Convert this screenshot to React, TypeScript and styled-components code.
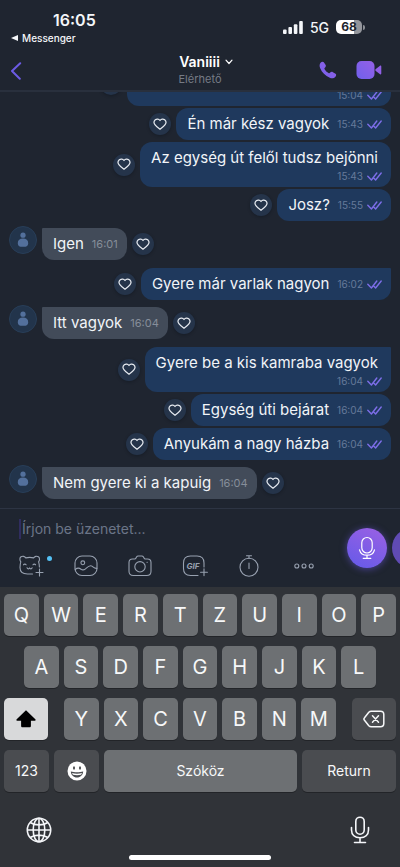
import React from 'react';
import styled, { createGlobalStyle, css } from 'styled-components';

const GlobalStyle = createGlobalStyle`
  *, *::before, *::after { box-sizing: border-box; }
  body {
    margin: 0;
    background: #1f2530;
    font-family: Inter, "Liberation Sans", sans-serif;
    -webkit-font-smoothing: antialiased;
  }
  button, input { font: inherit; }
`;

const Screen = styled.div`
  display: flex;
  flex-direction: column;
  height: 100vh;
  overflow: hidden;
  background: #1f2530;
  color: #f4f6f9;
`;

const IconButton = styled.button`
  display: inline-flex;
  align-items: center;
  justify-content: center;
  flex: none;
  padding: 0;
  border: 0;
  background: none;
  color: inherit;
  cursor: pointer;
  svg { display: block; }
`;

/* ---------- Top area ---------- */

const TopArea = styled.header`
  flex: none;
  border-bottom: 2px solid #29303d;
`;

const StatusBar = styled.div`
  display: flex;
  justify-content: space-between;
  height: 50px;
  padding: 10px 35px 0 11px;
`;

const StatusLeft = styled.div`
  display: flex;
  flex-direction: column;
`;

const Clock = styled.time`
  padding-left: 42px;
  font-size: 16px;
  line-height: 20px;
  font-weight: 600;
`;

const BackToApp = styled.a`
  display: flex;
  align-items: center;
  gap: 4px;
  font-size: 10px;
  line-height: 16px;
  font-weight: 500;
  color: #f4f6f9;
  text-decoration: none;
`;

const StatusRight = styled.div`
  display: flex;
  align-items: center;
  gap: 7px;
  height: 34px;
  font-size: 14px;
  font-weight: 500;
`;

const Battery = styled.div`
  display: flex;
  align-items: center;
  gap: 1px;
  &::after {
    content: '';
    width: 2px;
    height: 5px;
    border-radius: 0 2px 2px 0;
    background: #8b8e94;
  }
`;

const BatteryBody = styled.span`
  width: 26px;
  border-radius: 5px;
  background: linear-gradient(90deg, #ffffff 68%, #94969c 68%);
  color: #20242d;
  font-size: 12px;
  line-height: 14px;
  font-weight: 700;
  text-align: center;
`;

const NavBar = styled.div`
  display: grid;
  grid-template-columns: 1fr auto 1fr;
  align-items: center;
  height: 40px;
  padding: 0 18px 0 10px;
`;

const NavStart = styled.div`
  display: flex;
  padding-top: 2px;
`;

const Contact = styled.div`
  display: flex;
  flex-direction: column;
  align-items: center;
  padding-left: 8px;
`;

const ContactName = styled.button`
  display: flex;
  align-items: center;
  gap: 5px;
  padding: 0 0 0 12px;
  border: 0;
  background: none;
  color: #ffffff;
  font-size: 14px;
  line-height: 18px;
  font-weight: 600;
`;

const Presence = styled.span`
  font-size: 11px;
  line-height: 16px;
  color: #767b85;
`;

const Actions = styled.div`
  display: flex;
  align-items: center;
  justify-content: flex-end;
  gap: 19px;
`;

/* ---------- Messages ---------- */

const Chat = styled.main`
  display: flex;
  flex: 1;
  flex-direction: column;
  justify-content: flex-end;
  min-height: 0;
  padding: 0 9px;
  overflow: hidden;
`;

const MessageRow = styled.div<{ $own?: boolean; $first?: boolean }>`
  display: flex;
  flex: none;
  flex-direction: ${(p) => (p.$own ? 'row-reverse' : 'row')};
  align-items: center;
  gap: 5px;
  margin-top: ${(p) => (p.$first ? (p.$own ? 8 : 7) : 2)}px;
  &:last-child { margin-bottom: 9px; }
`;

const Avatar = styled.span`
  display: flex;
  align-items: center;
  justify-content: center;
  align-self: flex-start;
  width: 28px;
  height: 28px;
  margin-top: -2px;
  border: 1px solid #283e58;
  border-radius: 50%;
  background: #22344b;
`;

const Bubble = styled.div<{ $own?: boolean; $first?: boolean; $stacked?: boolean }>`
  display: flex;
  align-items: center;
  gap: 8px;
  min-height: 32px;
  padding: 0 9px 0 11px;
  border-radius: 12px;
  background: ${(p) => (p.$own ? '#1f395d' : '#424b59')};
  font-size: 15px;
  line-height: 20px;
  color: #f1f4f8;
  ${(p) => p.$first && (p.$own ? 'border-top-right-radius: 1px;' : 'border-top-left-radius: 1px;')}
  ${(p) =>
    p.$stacked &&
    css`
      flex-direction: column;
      align-items: flex-end;
      gap: 0;
      padding-top: 6px;
      padding-bottom: 3px;
    `}
`;

const MessageText = styled.span<{ $stacked?: boolean }>`
  white-space: nowrap;
  ${(p) => p.$stacked && 'margin-right: 4px;'}
`;

const Meta = styled.span<{ $own?: boolean }>`
  display: flex;
  align-items: center;
  gap: 4px;
  font-size: ${(p) => (p.$own ? 10 : 11)}px;
  line-height: 16px;
  color: ${(p) => (p.$own ? '#66799a' : '#868e9a')};
`;

const LikeButton = styled(IconButton)`
  width: 22px;
  height: 22px;
  border-radius: 50%;
  background: #25344a;
  color: #e6eaf0;
  box-shadow: 0 1px 3px rgba(10, 14, 22, 0.35);
`;

const ClippedBubble = styled(Bubble)`
  width: 264px;
`;

/* ---------- Composer ---------- */

const Composer = styled.form`
  display: flex;
  flex: none;
  align-items: center;
  justify-content: space-between;
  gap: 29px;
  height: 79px;
  padding-left: 17px;
  border-top: 1px solid #2d3443;
  overflow: hidden;
`;

const ComposerMain = styled.div`
  display: flex;
  flex: 1;
  flex-direction: column;
  gap: 15px;
  min-width: 0;
`;

const MessageInput = styled.input`
  width: 100%;
  height: 20px;
  padding: 0 0 0 1px;
  margin-left: 2px;
  border: 0;
  border-left: 2px solid #302d5f;
  outline: 0;
  background: none;
  color: #f1f4f8;
  font-size: 14px;
  &::placeholder { color: #6b7588; opacity: 1; }
`;

const Tools = styled.div`
  display: flex;
  justify-content: space-between;
`;

const ToolButton = styled(IconButton)<{ $dot?: boolean }>`
  position: relative;
  width: 28px;
  height: 24px;
  color: #98a1b0;
  ${(p) =>
    p.$dot &&
    css`
      &::after {
        content: '';
        position: absolute;
        top: 2px;
        right: -7px;
        width: 5px;
        height: 5px;
        border-radius: 50%;
        background: #54c1f5;
      }
    `}
`;

const Recorders = styled.div`
  display: flex;
  flex: none;
  gap: 5px;
  width: 53px;
`;

const RecordButton = styled(IconButton)<{ $muted?: boolean }>`
  width: 40px;
  height: 40px;
  border-radius: 50%;
  background: ${(p) => (p.$muted ? '#604bb4' : 'linear-gradient(205deg, #9660e4 10%, #6c5be8 85%)')};
  color: #ffffff;
  box-shadow: ${(p) => (p.$muted ? 'none' : '0 1px 7px rgba(109, 91, 232, 0.55)')};
`;

/* ---------- Keyboard ---------- */

const Keyboard = styled.section`
  display: flex;
  flex: none;
  flex-direction: column;
  gap: 10px;
  padding: 7px 4px;
  background: #303338;
`;

const KeyRow = styled.div<{ $inset?: boolean }>`
  display: flex;
  gap: 5px;
  padding: 0 ${(p) => (p.$inset ? 20 : 0)}px;
`;

const LetterGroup = styled.div`
  display: flex;
  flex: 1;
  gap: 5px;
  margin: 0 11px;
`;

const Key = styled.button<{ $tone?: 'dark' | 'light'; $width?: number; $label?: boolean }>`
  display: flex;
  align-items: center;
  justify-content: center;
  flex: ${(p) => (p.$width ? `0 0 ${p.$width}px` : '1 1 0')};
  min-width: 0;
  height: 42px;
  padding: 0;
  border: 0;
  border-radius: 5px;
  background: ${(p) => (p.$tone === 'dark' ? '#4a4c50' : p.$tone === 'light' ? '#d8d9da' : '#6d7073')};
  box-shadow: 0 1px 0 #222428;
  color: ${(p) => (p.$tone === 'light' ? '#000000' : '#f7f8f9')};
  font-size: ${(p) => (p.$label ? 14 : 20)}px;
  line-height: 24px;
`;

const KeyboardFooter = styled.div`
  display: flex;
  align-items: center;
  justify-content: space-between;
  height: 43px;
  padding: 12px 26px 0 22px;
`;

const HomeIndicator = styled.div`
  align-self: center;
  width: 36%;
  height: 5px;
  border-radius: 3px;
  background: #ffffff;
`;

/* ---------- Icons ---------- */

const SignalIcon = () => (
  <svg width="20" height="13" viewBox="0 0 20 13" fill="currentColor" aria-hidden="true">
    <rect x="0" y="8.5" width="3.6" height="4.5" rx="1" />
    <rect x="5.4" y="6" width="3.6" height="7" rx="1" />
    <rect x="10.8" y="3.2" width="3.6" height="9.8" rx="1" />
    <rect x="16.2" y="0" width="3.6" height="13" rx="1" />
  </svg>
);

const BackIcon = () => (
  <svg width="12" height="18" viewBox="0 0 12 18" fill="none" stroke="#6c5be4" strokeWidth="2" strokeLinecap="round" strokeLinejoin="round">
    <path d="M10.2 1.2 2 9l7.8 7.8" />
  </svg>
);

const PhoneIcon = () => (
  <svg width="18" height="18" viewBox="0 0 18 18">
    <defs>
      <linearGradient id="phoneFill" x1="1" y1="0" x2="0" y2="1">
        <stop offset="0" stopColor="#9560e6" />
        <stop offset="1" stopColor="#7460ea" />
      </linearGradient>
    </defs>
    <path
      fill="url(#phoneFill)"
      d="M1.800 1.500C2.800.5 4 .4 4.800 1.300l1.700 2.500c.6.900.5 1.700-.2 2.400l-.7.8c-.3.400-.3.800 0 1.200.9 1.600 2.200 2.900 3.900 3.900.4.300.8.200 1.200-.1l.8-.7c.7-.6 1.500-.7 2.400-.1l2.600 1.600c.9.700.9 1.900-.1 2.900-1.500 1.600-3.400 2-5.600 1C6.300 14.900 2.900 11.500 1.100 7 .3 4.900.4 2.900 1.800 1.500Z"
    />
  </svg>
);

const VideoIcon = () => (
  <svg width="26" height="18" viewBox="0 0 26 18">
    <defs>
      <linearGradient id="videoFill" x1="1" y1="0" x2="0" y2="1">
        <stop offset="0" stopColor="#9560e6" />
        <stop offset="1" stopColor="#7060ec" />
      </linearGradient>
    </defs>
    <rect x="0.5" y="0" width="18" height="18" rx="5" fill="url(#videoFill)" />
    <path fill="#9160e6" d="M19.800 8.100 24 4.800c.7-.5 1.300-.2 1.300.6v7.200c0 .8-.6 1.100-1.300.6l-4.200-3.300c-.7-.5-.7-1.300 0-1.800Z" />
  </svg>
);

const HeartIcon = () => (
  <svg width="14" height="13" viewBox="0 0 14 13" fill="none" stroke="currentColor" strokeWidth="1.2" strokeLinejoin="round" aria-hidden="true">
    <path d="M7 2.500C5.800.8 3.600.7 2.300 1.800.8 3.100.8 5.200 1.900 6.700 3.100 8.400 5 9.900 7 11.300c2-1.400 3.900-2.900 5.100-4.600 1.100-1.500 1.100-3.600-.4-4.900C10.400.7 8.200.8 7 2.500Z" />
  </svg>
);

const SeenIcon = () => (
  <svg width="15" height="9" viewBox="0 0 15 9" fill="none" stroke="#7d6ee8" strokeWidth="1.4" strokeLinecap="round" strokeLinejoin="round" role="img" aria-label="Seen">
    <path d="M.8 4.200 4.400 8l5.400-7M7.200 6.500 8.600 8l5.600-7" />
  </svg>
);

const PersonIcon = () => (
  <svg width="12" height="16" viewBox="0 0 12 16" fill="#53709c" aria-hidden="true">
    <circle cx="6" cy="3.2" r="2.6" />
    <path d="M6 6.600c3.200 0 5.200 1.600 5.200 4.300 0 2.800-1.400 3.900-5.200 3.900S.8 13.700.8 10.900c0-2.700 2-4.300 5.200-4.300Z" />
  </svg>
);

const toolStroke = {
  fill: 'none',
  stroke: 'currentColor',
  strokeWidth: 1.1,
  strokeLinecap: 'round' as const,
  strokeLinejoin: 'round' as const,
};

const StickerIcon = () => (
  <svg width="26" height="22" viewBox="0 0 26 22" {...toolStroke}>
    <path d="M14.500 19H9.500C4.200 19 2 16.700 2 12.500c0-2.500.3-4.200.8-5.600C1.500 5.200 1.600 2.700 3 1.800c1.600-1 3.800-.6 4.800 1.100 2.200-.6 5.600-.6 7.800 0 1-1.700 3.200-2.100 4.800-1.100 1.400.9 1.500 3.400.2 5.100.5 1.400.8 2.900.8 5.100" />
    <path d="M5.500 9.800c.6-.9 2-.9 2.600 0M15 9.800c.6-.9 2-.9 2.600 0M9 12.700c.3 1.400 2 1.600 2.600.2.600 1.400 2.300 1.200 2.600-.2M21.500 14v7M18 17.500h7" />
  </svg>
);

const GalleryIcon = () => (
  <svg width="24" height="22" viewBox="0 0 24 22" {...toolStroke}>
    <rect x="1" y="1" width="22" height="19.5" rx="7" />
    <circle cx="8.8" cy="7.8" r="1.9" />
    <path d="M1.200 14.500c2.200-1.800 4-1.700 5.800-.3 1.700 1.400 2.800 1 4.500-.4 2.300-2 4.300-4 6.400-2.700 1.500 1 3 2.800 4.900 2.200" />
  </svg>
);

const CameraIcon = () => (
  <svg width="24" height="22" viewBox="0 0 24 22" {...toolStroke}>
    <path d="M4.500 4h2.200c.6 0 1-.3 1.300-.9l.5-1c.4-.7.9-1.100 1.700-1.100h3.600c.8 0 1.300.4 1.700 1.100l.5 1c.3.600.7.900 1.300.9h2.200C21.800 4 23 5.300 23 7.500v8.700c0 3-1.500 4.300-4.300 4.300H5.300C2.500 20.500 1 19.200 1 16.200V7.500C1 5.300 2.200 4 4.500 4Z" />
    <circle cx="12" cy="11.8" r="5.2" />
    <path d="M19 7.200h.3" />
  </svg>
);

const GifIcon = () => (
  <svg width="26" height="22" viewBox="0 0 26 22" {...toolStroke}>
    <path d="M16 20.500H8.500C3.700 20.500 1.500 18 1.500 13.500V8c0-4.500 2.200-7 7-7H15c4.800 0 7 2.500 7 7v4" />
    <path d="M22 13.800v6.800M18.600 17.200h6.800" />
    <text x="4.500" y="13.600" fill="currentColor" stroke="none" fontFamily="Inter, sans-serif" fontSize="8" fontWeight="700" fontStyle="italic">GIF</text>
  </svg>
);

const TimerIcon = () => (
  <svg width="20" height="22" viewBox="0 0 20 22" {...toolStroke}>
    <circle cx="10" cy="12.2" r="9" />
    <path d="M10 8v5.500M7.500.8h5M10 .8v2.400" />
  </svg>
);

const MoreIcon = () => (
  <svg width="20" height="6" viewBox="0 0 20 6" {...toolStroke}>
    <circle cx="2.8" cy="3" r="2" />
    <circle cx="10" cy="3" r="2" />
    <circle cx="17.2" cy="3" r="2" />
  </svg>
);

const RecordIcon = () => (
  <svg width="18" height="24" viewBox="0 0 18 24" fill="none" stroke="currentColor" strokeWidth="1.2" strokeLinecap="round">
    <rect x="3.8" y="1.5" width="10.4" height="15.5" rx="5.2" />
    <path d="M1.500 13.800c.9 3.600 3.700 5.400 7.500 5.400s6.600-1.800 7.500-5.400M9 19.200v3M5.200 22.300h7.600" />
  </svg>
);

const ShiftIcon = () => (
  <svg width="20" height="18" viewBox="0 0 20 18" fill="currentColor">
    <path d="M9.200.9c.5-.5 1.100-.5 1.600 0l8.500 8.300c.7.700.4 1.500-.5 1.500h-3.900v5c0 1-.5 1.500-1.500 1.500H6.600c-1 0-1.500-.5-1.500-1.500v-5H1.200c-.9 0-1.200-.8-.5-1.500Z" />
  </svg>
);

const DeleteIcon = () => (
  <svg width="22" height="18" viewBox="0 0 22 18" fill="none" stroke="currentColor" strokeWidth="1.5" strokeLinecap="round" strokeLinejoin="round">
    <path d="M8.200 1.200h9.300c2.200 0 3.300 1 3.300 3.200v9.200c0 2.200-1.100 3.200-3.300 3.200H8.200c-1 0-1.700-.3-2.400-1L1.500 10.300c-.8-.9-.8-1.700 0-2.600l4.300-5.500c.7-.7 1.400-1 2.400-1Z" />
    <path d="m9.500 5.800 6 6.400M15.500 5.800l-6 6.400" />
  </svg>
);

const EmojiIcon = () => (
  <svg width="20" height="20" viewBox="0 0 20 20">
    <circle cx="10" cy="10" r="9.5" fill="#ffffff" />
    <ellipse cx="7" cy="7" rx="1" ry="1.7" fill="#4a4c50" />
    <ellipse cx="13" cy="7" rx="1" ry="1.7" fill="#4a4c50" />
    <path d="M3.800 10.500c3.500 1.100 8.900 1.100 12.400 0-.3 3.500-2.800 6-6.200 6s-5.900-2.500-6.200-6Z" fill="#4a4c50" />
    <path d="M5 12c3 .9 7 .9 10 0-.3.900-.6 1.400-1 1.800-2.500.6-5.500.6-8 0-.4-.4-.7-.9-1-1.800Z" fill="#ffffff" />
  </svg>
);

const GlobeIcon = () => (
  <svg width="26" height="26" viewBox="0 0 26 26" fill="none" stroke="currentColor" strokeWidth="1.6">
    <circle cx="13" cy="13" r="11.7" />
    <ellipse cx="13" cy="13" rx="5.8" ry="11.7" />
    <path d="M13 1.300v23.400M1.300 13h23.400M4.200 5.500c4.800 3.200 12.800 3.200 17.600 0M4.200 20.500c4.800-3.200 12.800-3.200 17.600 0" />
  </svg>
);

const DictateIcon = () => (
  <svg width="20" height="28" viewBox="0 0 20 28" fill="none" stroke="currentColor" strokeWidth="1.6" strokeLinecap="round">
    <rect x="5.8" y="1.2" width="8.4" height="17" rx="4.2" />
    <path d="M1.500 11.500v2.500c0 4.800 3.300 7.700 8.500 7.700s8.500-2.900 8.500-7.700v-2.500M10 21.700v4.500M4.500 26.500h11" />
  </svg>
);

/* ---------- Data ---------- */

type Message = { text: string; time: string; own?: boolean; first?: boolean; stacked?: boolean };

const messages: Message[] = [
  { text: 'Én már kész vagyok', time: '15:43', own: true },
  { text: 'Az egység út felől tudsz bejönni', time: '15:43', own: true, stacked: true },
  { text: 'Josz?', time: '15:55', own: true },
  { text: 'Igen', time: '16:01', first: true },
  { text: 'Gyere már varlak nagyon', time: '16:02', own: true, first: true },
  { text: 'Itt vagyok', time: '16:04', first: true },
  { text: 'Gyere be a kis kamraba vagyok', time: '16:04', own: true, first: true, stacked: true },
  { text: 'Egység úti bejárat', time: '16:04', own: true },
  { text: 'Anyukám a nagy házba', time: '16:04', own: true },
  { text: 'Nem gyere ki a kapuig', time: '16:04', first: true },
];

const Like = () => (
  <LikeButton type="button" aria-label="Like">
    <HeartIcon />
  </LikeButton>
);

const MessageItem = ({ text, time, own, first, stacked }: Message) => (
  <MessageRow $own={own} $first={first}>
    {!own && (
      <Avatar>
        <PersonIcon />
      </Avatar>
    )}
    <Bubble $own={own} $first={first} $stacked={stacked}>
      <MessageText $stacked={stacked}>{text}</MessageText>
      <Meta $own={own}>
        <time>{time}</time>
        {own && <SeenIcon />}
      </Meta>
    </Bubble>
    <Like />
  </MessageRow>
);

const Letters = ({ keys }: { keys: string }) => (
  <>
    {keys.split('').map((k) => (
      <Key key={k} type="button">
        {k}
      </Key>
    ))}
  </>
);

export default function App() {
  return (
    <Screen>
      <GlobalStyle />
      <TopArea>
        <StatusBar>
          <StatusLeft>
            <Clock>16:05</Clock>
            <BackToApp href="#messenger">
              <svg width="7" height="6" viewBox="0 0 7 6" fill="currentColor" aria-hidden="true">
                <path d="M7 0v6L0 3Z" />
              </svg>
              Messenger
            </BackToApp>
          </StatusLeft>
          <StatusRight>
            <SignalIcon />
            <span>5G</span>
            <Battery>
              <BatteryBody>68</BatteryBody>
            </Battery>
          </StatusRight>
        </StatusBar>
        <NavBar>
          <NavStart>
            <IconButton type="button" aria-label="Back">
              <BackIcon />
            </IconButton>
          </NavStart>
          <Contact>
            <ContactName type="button">
              Vaniiii
              <svg width="8" height="6" viewBox="0 0 8 6" fill="none" stroke="currentColor" strokeWidth="1.2" strokeLinecap="round" strokeLinejoin="round" aria-hidden="true">
                <path d="m1 1.200 3 3.300 3-3.300" />
              </svg>
            </ContactName>
            <Presence>Elérhető</Presence>
          </Contact>
          <Actions>
            <IconButton type="button" aria-label="Call">
              <PhoneIcon />
            </IconButton>
            <IconButton type="button" aria-label="Video call">
              <VideoIcon />
            </IconButton>
          </Actions>
        </NavBar>
      </TopArea>

      <Chat>
        <MessageRow $own>
          <ClippedBubble $own $stacked>
            <MessageText $stacked>&nbsp;</MessageText>
            <Meta $own>
              <time>15:04</time>
              <SeenIcon />
            </Meta>
          </ClippedBubble>
          <Like />
        </MessageRow>
        {messages.map((m) => (
          <MessageItem key={m.text} {...m} />
        ))}
      </Chat>

      <Composer onSubmit={(e) => e.preventDefault()}>
        <ComposerMain>
          <MessageInput type="text" aria-label="Üzenet" placeholder="Írjon be üzenetet..." />
          <Tools>
            <ToolButton type="button" aria-label="Stickers" $dot><StickerIcon /></ToolButton>
            <ToolButton type="button" aria-label="Gallery"><GalleryIcon /></ToolButton>
            <ToolButton type="button" aria-label="Camera"><CameraIcon /></ToolButton>
            <ToolButton type="button" aria-label="GIF"><GifIcon /></ToolButton>
            <ToolButton type="button" aria-label="Timer"><TimerIcon /></ToolButton>
            <ToolButton type="button" aria-label="More"><MoreIcon /></ToolButton>
          </Tools>
        </ComposerMain>
        <Recorders>
          <RecordButton type="button" aria-label="Record voice"><RecordIcon /></RecordButton>
          <RecordButton type="button" aria-label="Record video" $muted />
        </Recorders>
      </Composer>

      <Keyboard aria-label="Keyboard">
        <KeyRow><Letters keys="QWERTZUIOP" /></KeyRow>
        <KeyRow $inset><Letters keys="ASDFGHJKL" /></KeyRow>
        <KeyRow>
          <Key type="button" aria-label="Shift" $tone="light" $width={44}><ShiftIcon /></Key>
          <LetterGroup><Letters keys="YXCVBNM" /></LetterGroup>
          <Key type="button" aria-label="Delete" $tone="dark" $width={44}><DeleteIcon /></Key>
        </KeyRow>
        <KeyRow>
          <Key type="button" $tone="dark" $width={45} $label>123</Key>
          <Key type="button" aria-label="Emoji" $tone="dark" $width={45}><EmojiIcon /></Key>
          <Key type="button" $label>Szóköz</Key>
          <Key type="button" $tone="dark" $width={94} $label>Return</Key>
        </KeyRow>
        <KeyboardFooter>
          <IconButton type="button" aria-label="Language"><GlobeIcon /></IconButton>
          <IconButton type="button" aria-label="Dictate"><DictateIcon /></IconButton>
        </KeyboardFooter>
        <HomeIndicator />
      </Keyboard>
    </Screen>
  );
}
